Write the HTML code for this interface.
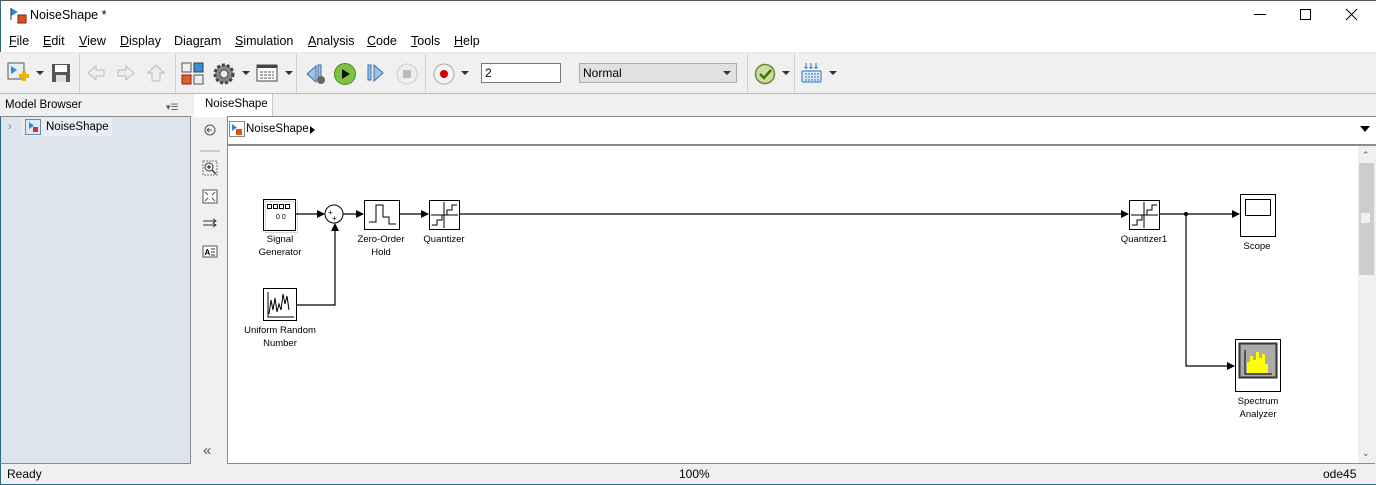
<!DOCTYPE html>
<html><head><meta charset="utf-8">
<style>
*{margin:0;padding:0;box-sizing:border-box}
body{width:1376px;height:485px;overflow:hidden;background:#f0f0f0;font-family:"Liberation Sans",sans-serif;font-size:12px;color:#000;position:relative}
.a{position:absolute}
.menu span{position:absolute;top:34px;font-size:12.5px}
.menu u{text-decoration:underline}
.dd{position:absolute;width:0;height:0;border-left:4px solid transparent;border-right:4px solid transparent;border-top:4px solid #333}
.sep{position:absolute;top:54px;width:1px;height:38px;background:#d0d0d0}
svg text{font-family:"Liberation Sans",sans-serif;font-size:9.5px}
</style></head><body>
<!-- title bar -->
<div class="a" style="left:0;top:0;width:1376px;height:52px;background:#fff;border-left:1px solid #2b6a80;border-top:1px solid #555"></div>
<svg class="a" style="left:8px;top:6px" width="20" height="20"><path d="M3 2 L3 10 L10 6 Z" fill="#2d8ad8"/><path d="M3 2v12" stroke="#333" stroke-width="1"/><rect x="10" y="9" width="8" height="8" fill="#d9531e" stroke="#7a2a10"/></svg>
<div class="a" style="left:30px;top:8px;font-size:12.5px">NoiseShape *</div>
<div class="a" style="left:1254px;top:14px;width:12px;height:1px;background:#000"></div>
<div class="a" style="left:1300px;top:9px;width:11px;height:11px;border:1px solid #000"></div>
<svg class="a" style="left:1345px;top:8px" width="14" height="14"><path d="M1 1L12 12M12 1L1 12" stroke="#000" stroke-width="1"/></svg>
<div class="menu">
<span style="left:9px"><u>F</u>ile</span><span style="left:43px"><u>E</u>dit</span><span style="left:79px"><u>V</u>iew</span><span style="left:120px"><u>D</u>isplay</span><span style="left:174px">Diag<u>r</u>am</span><span style="left:235px"><u>S</u>imulation</span><span style="left:308px"><u>A</u>nalysis</span><span style="left:367px"><u>C</u>ode</span><span style="left:411px"><u>T</u>ools</span><span style="left:454px"><u>H</u>elp</span>
</div>
<!-- toolbar -->
<div class="a" style="left:0;top:52px;width:1376px;height:42px;background:#f0f0f0;border-top:1px solid #e6e6e6;border-bottom:1px solid #bbb"></div>
<svg class="a" style="left:7px;top:62px" width="24" height="24"><rect x="1" y="1" width="16" height="16" fill="#e8eef4" stroke="#555"/><path d="M4 4v8l6-4z" fill="#2d8ad8"/><path d="M12 14h10M17 9v10" stroke="#e8b800" stroke-width="4"/></svg>
<div class="dd" style="left:36px;top:71px"></div>
<svg class="a" style="left:51px;top:63px" width="20" height="20"><rect x="1" y="1" width="18" height="18" fill="#555"/><rect x="4" y="2" width="12" height="7" fill="#fff"/><rect x="5" y="12" width="10" height="7" fill="#ddd"/></svg>
<div class="sep" style="left:79px"></div>
<svg class="a" style="left:86px;top:64px" width="80" height="18"><path d="M2 9l8-7v4h8v6h-8v4z" fill="#eee" stroke="#bbb"/><path d="M48 9l-8-7v4h-8v6h8v4z" fill="#eee" stroke="#bbb"/><path d="M70 1l8 8h-4v8h-8v-8h-4z" fill="#eee" stroke="#bbb"/></svg>
<div class="sep" style="left:175px"></div>
<svg class="a" style="left:181px;top:62px" width="24" height="24"><rect x="1" y="1" width="9" height="9" fill="#eee" stroke="#555"/><rect x="13" y="1" width="9" height="9" fill="#3a8fd6" stroke="#245"/><rect x="1" y="13" width="9" height="9" fill="#e06020" stroke="#822"/><rect x="13" y="13" width="9" height="9" fill="#eee" stroke="#555"/></svg>
<svg class="a" style="left:212px;top:62px" width="24" height="24"><circle cx="12" cy="12" r="9" fill="#888" stroke="#444" stroke-width="3" stroke-dasharray="3 2"/><circle cx="12" cy="12" r="4" fill="#eee" stroke="#444"/></svg>
<div class="dd" style="left:242px;top:71px"></div>
<svg class="a" style="left:256px;top:63px" width="22" height="20"><rect x="1" y="2" width="20" height="16" fill="#fff" stroke="#444"/><rect x="1" y="2" width="20" height="3" fill="#444"/><path d="M4 9h14M4 12h14M4 15h14" stroke="#555" stroke-dasharray="3 1"/></svg>
<div class="dd" style="left:285px;top:71px"></div>
<div class="sep" style="left:296px"></div>
<svg class="a" style="left:304px;top:62px" width="24" height="24"><path d="M12 4l-9 8 9 8z" fill="#9cc4ea" stroke="#3a6fa8"/><rect x="14" y="3" width="3" height="13" fill="#9cc4ea" stroke="#3a6fa8"/><circle cx="17" cy="18" r="4" fill="#666"/></svg>
<svg class="a" style="left:333px;top:62px" width="24" height="24"><circle cx="12" cy="12" r="10.5" fill="#7dc242" stroke="#4a8a20"/><path d="M9 7v10l8-5z" fill="#111"/></svg>
<svg class="a" style="left:366px;top:63px" width="20" height="20"><rect x="2" y="2" width="3" height="15" fill="#9cc4ea" stroke="#3a6fa8"/><path d="M8 2l9 8-9 8z" fill="#9cc4ea" stroke="#3a6fa8"/></svg>
<svg class="a" style="left:396px;top:62px" width="24" height="24"><circle cx="11" cy="12" r="10" fill="#eee" stroke="#ccc"/><rect x="7" y="8" width="8" height="8" fill="#bbb"/></svg>
<div class="sep" style="left:425px"></div>
<svg class="a" style="left:433px;top:62px" width="24" height="24"><circle cx="11" cy="12" r="10" fill="#f4f4f4" stroke="#aaa"/><circle cx="11" cy="12" r="4" fill="#c00"/></svg>
<div class="dd" style="left:461px;top:71px"></div>
<div class="a" style="left:481px;top:63px;width:80px;height:20px;background:#fff;border:1px solid #7a7a7a;padding:2px 3px;font-size:12px">2</div>
<div class="a" style="left:579px;top:63px;width:158px;height:20px;background:#e1e1e1;border:1px solid #adadad;padding:2px 3px;font-size:12px">Normal</div>
<div class="dd" style="left:723px;top:71px"></div>
<div class="sep" style="left:747px"></div>
<svg class="a" style="left:754px;top:62px" width="24" height="24"><circle cx="11" cy="12" r="9.5" fill="#c9dea0" stroke="#6a8a30" stroke-width="1.5"/><path d="M6 12l4 4 7-8" stroke="#3a7a10" stroke-width="2.5" fill="none"/></svg>
<div class="dd" style="left:782px;top:71px"></div>
<div class="sep" style="left:794px"></div>
<svg class="a" style="left:801px;top:62px" width="22" height="22"><path d="M5 1v5M10 1v5M15 1v5" stroke="#2a70c0"/><path d="M3 5l2 2 2-2M8 5l2 2 2-2M13 5l2 2 2-2" fill="#2a70c0"/><rect x="1" y="9" width="19" height="11" rx="1" fill="#dde9f8" stroke="#2a70c0"/><path d="M4 12h14M4 15h14M4 18h14" stroke="#2a70c0" stroke-dasharray="2 1"/></svg>
<div class="dd" style="left:829px;top:71px"></div>
<!-- model browser -->
<div class="a" style="left:5px;top:99px;font-size:11.5px">Model Browser</div>
<div class="a" style="left:166px;top:102px;font-size:9px;color:#555">▾☰</div>
<div class="a" style="left:0;top:116px;width:191px;height:348px;background:#dde4ec;border:1px solid #8a8a8a;border-left:1px solid #2b6a80"></div>
<div class="a" style="left:22px;top:118px;width:90px;height:18px;background:#e8eef3"></div>
<div class="a" style="left:8px;top:121px;color:#888;font-size:11px">›</div>
<svg class="a" style="left:25px;top:119px" width="16" height="16"><rect x="0.5" y="0.5" width="15" height="15" fill="#dde8f2" stroke="#6a8aa8"/><path d="M4 3v7l5-3.5z" fill="#2d8ad8"/><rect x="8" y="8" width="5" height="5" fill="#c33"/></svg>
<div class="a" style="left:46px;top:121px;font-size:11.5px">NoiseShape</div>
<!-- tab -->
<div class="a" style="left:194px;top:94px;width:79px;height:23px;background:#fff;border-right:1px solid #ccc"></div>
<div class="a" style="left:205px;top:98px;font-size:11.5px">NoiseShape</div>
<!-- left vertical tools -->
<svg class="a" style="left:200px;top:121px" width="20" height="340">
<circle cx="10" cy="9" r="5" fill="none" stroke="#555"/><path d="M7 9h5M7 9l2-2M7 9l2 2" stroke="#555"/>
<path d="M0 30h20" stroke="#aaa"/>
<rect x="3" y="40" width="14" height="14" fill="none" stroke="#777" stroke-dasharray="2 1"/><circle cx="9" cy="46" r="4" fill="#fff" stroke="#333"/><path d="M7 46h4M9 44v4M12 49l4 4" stroke="#333" stroke-width="1.3"/>
<rect x="3" y="69" width="14" height="13" fill="#fff" stroke="#555"/><path d="M5 71l3 3M15 71l-3 3M5 80l3-3M15 80l-3-3" stroke="#555"/>
<path d="M3 100h12M3 104h12M13 98l3 2-3 2M13 102l3 2-3 2" stroke="#333" fill="none"/>
<rect x="3" y="125" width="14" height="11" fill="#fff" stroke="#555"/><text x="4.5" y="134" style="font-size:8px;font-weight:bold">A</text><path d="M11 128h4M11 131h4M11 134h4" stroke="#333"/>
<text x="3" y="334" style="font-size:15px;fill:#555">«</text>
</svg>
<!-- breadcrumb -->
<div class="a" style="left:227px;top:116px;width:1149px;height:30px;background:#fff;border-top:1px solid #8a8a8a;border-left:1px solid #8a8a8a;border-bottom:2px solid #8a8a8a"></div>
<svg class="a" style="left:229px;top:121px" width="16" height="16"><rect x="0.5" y="0.5" width="15" height="15" fill="#fff" stroke="#888"/><path d="M3 3v7l5-3.5z" fill="#2d8ad8"/><rect x="7" y="8" width="6" height="6" fill="#d9531e"/></svg>
<div class="a" style="left:246px;top:123px;font-size:11.5px">NoiseShape</div>
<div class="a" style="left:310px;top:126px;width:0;height:0;border-top:4px solid transparent;border-bottom:4px solid transparent;border-left:5px solid #000"></div>
<div class="a" style="left:1360px;top:126px;width:0;height:0;border-left:5px solid transparent;border-right:5px solid transparent;border-top:6px solid #000"></div>
<!-- canvas -->
<div class="a" style="left:227px;top:146px;width:1131px;height:318px;background:#fff;border-left:1px solid #8a8a8a;border-bottom:1px solid #8a8a8a"></div>
<div class="a" style="left:1358px;top:146px;width:17px;height:318px;background:#f0f0f0;border-bottom:1px solid #8a8a8a"></div>
<div class="a" style="left:1359px;top:163px;width:15px;height:112px;background:#cdcdcd"></div>
<div class="a" style="left:1361px;top:213px;width:9px;height:10px;background:#f0f0f0"></div>
<div class="a" style="left:1362px;top:150px;font-size:9px;color:#555">⌃</div>
<div class="a" style="left:1362px;top:448px;font-size:9px;color:#555">⌄</div>
<svg class="a" style="left:0;top:0" width="1358" height="464">
<defs><marker id="ar" markerWidth="8" markerHeight="8" refX="7" refY="4" orient="auto" markerUnits="userSpaceOnUse"><path d="M0 0L8 4L0 8z" fill="#000"/></marker></defs>
<g fill="#fff" stroke="#000">
<rect x="263.5" y="199.5" width="32" height="31"/>
<rect x="364.5" y="200.5" width="35" height="29"/>
<rect x="429.5" y="200.5" width="30" height="29"/>
<rect x="1129.5" y="200.5" width="30" height="29"/>
<rect x="1240.5" y="194.5" width="35" height="42"/>
<rect x="1235.5" y="339.5" width="45" height="52"/>
<rect x="263.5" y="288.5" width="33" height="32"/>
<circle cx="334" cy="214" r="9"/>
</g>
<g stroke="#555" fill="none" stroke-width="1.5"><rect x="264.5" y="200.5" width="32" height="31" stroke="#aaa" stroke-width="1" transform="translate(1,1)" opacity="0.5"/></g>
<g fill="none" stroke="#000" stroke-width="1.2">
<path d="M295 214H324" marker-end="url(#ar)"/>
<path d="M343 214H363" marker-end="url(#ar)"/>
<path d="M399 214H428" marker-end="url(#ar)"/>
<path d="M459 214H1128" marker-end="url(#ar)"/>
<path d="M1159 214H1239" marker-end="url(#ar)"/>
<path d="M1186 214V366H1234" marker-end="url(#ar)"/>
<path d="M296 305H335V224" marker-end="url(#ar)"/>
</g>
<circle cx="1186" cy="214" r="2" fill="#000"/>
<!-- icons inside -->
<g fill="none" stroke="#000" stroke-width="1">
<rect x="267.5" y="204.5" width="4" height="4"/><rect x="273.5" y="204.5" width="4" height="4"/><rect x="279.5" y="204.5" width="4" height="4"/><rect x="285.5" y="204.5" width="4" height="4"/>
<path d="M369 222h7v-17h7v12h6v7h7"/>
<path d="M432 225h5v-5h5v-5h5v-5h5v-5h5M444 202v26M431 215h27"/>
<path d="M1132 225h5v-5h5v-5h5v-5h5v-5h5M1144 202v26M1131 215h27"/>
<rect x="1245.5" y="199.5" width="25" height="16"/>
<path d="M268 292v25h26M269 314l2-14 2 10 2-12 2 14 2-8 2 6 2-16 2 10 2 -8 2 14"/>
</g>
<text x="276" y="219" style="font-size:7px">0 0</text>
<text x="328" y="215" style="font-size:8px">+</text><text x="332" y="221" style="font-size:8px">+</text>
<rect x="1239.5" y="343.5" width="37" height="34" fill="#aaa" stroke="#333" stroke-width="2"/>
<path d="M1245 350v24h27" stroke="#000" fill="none"/>
<g fill="#ff0"><rect x="1247" y="362" width="3" height="11"/><rect x="1250" y="356" width="3" height="17"/><rect x="1253" y="360" width="3" height="13"/><rect x="1256" y="352" width="3" height="21"/><rect x="1259" y="358" width="3" height="15"/><rect x="1262" y="354" width="3" height="19"/><rect x="1265" y="364" width="3" height="9"/></g>
<g text-anchor="middle">
<text x="280" y="242">Signal</text><text x="280" y="255">Generator</text>
<text x="381" y="242">Zero-Order</text><text x="381" y="255">Hold</text>
<text x="444" y="242">Quantizer</text>
<text x="1144" y="242">Quantizer1</text>
<text x="1257" y="249">Scope</text>
<text x="1258" y="404">Spectrum</text><text x="1258" y="417">Analyzer</text>
<text x="280" y="333">Uniform Random</text><text x="280" y="346">Number</text>
</g>
</svg>
<!-- status bar -->
<div class="a" style="left:0;top:464px;width:1376px;height:21px;background:#f0f0f0;border-left:1px solid #2b6a80;border-bottom:1px solid #2b6a80"></div>
<div class="a" style="left:7px;top:467px;font-size:12px">Ready</div>
<div class="a" style="left:679px;top:467px;font-size:12px">100%</div>
<div class="a" style="left:1323px;top:467px;font-size:12px">ode45</div>
</body></html>
